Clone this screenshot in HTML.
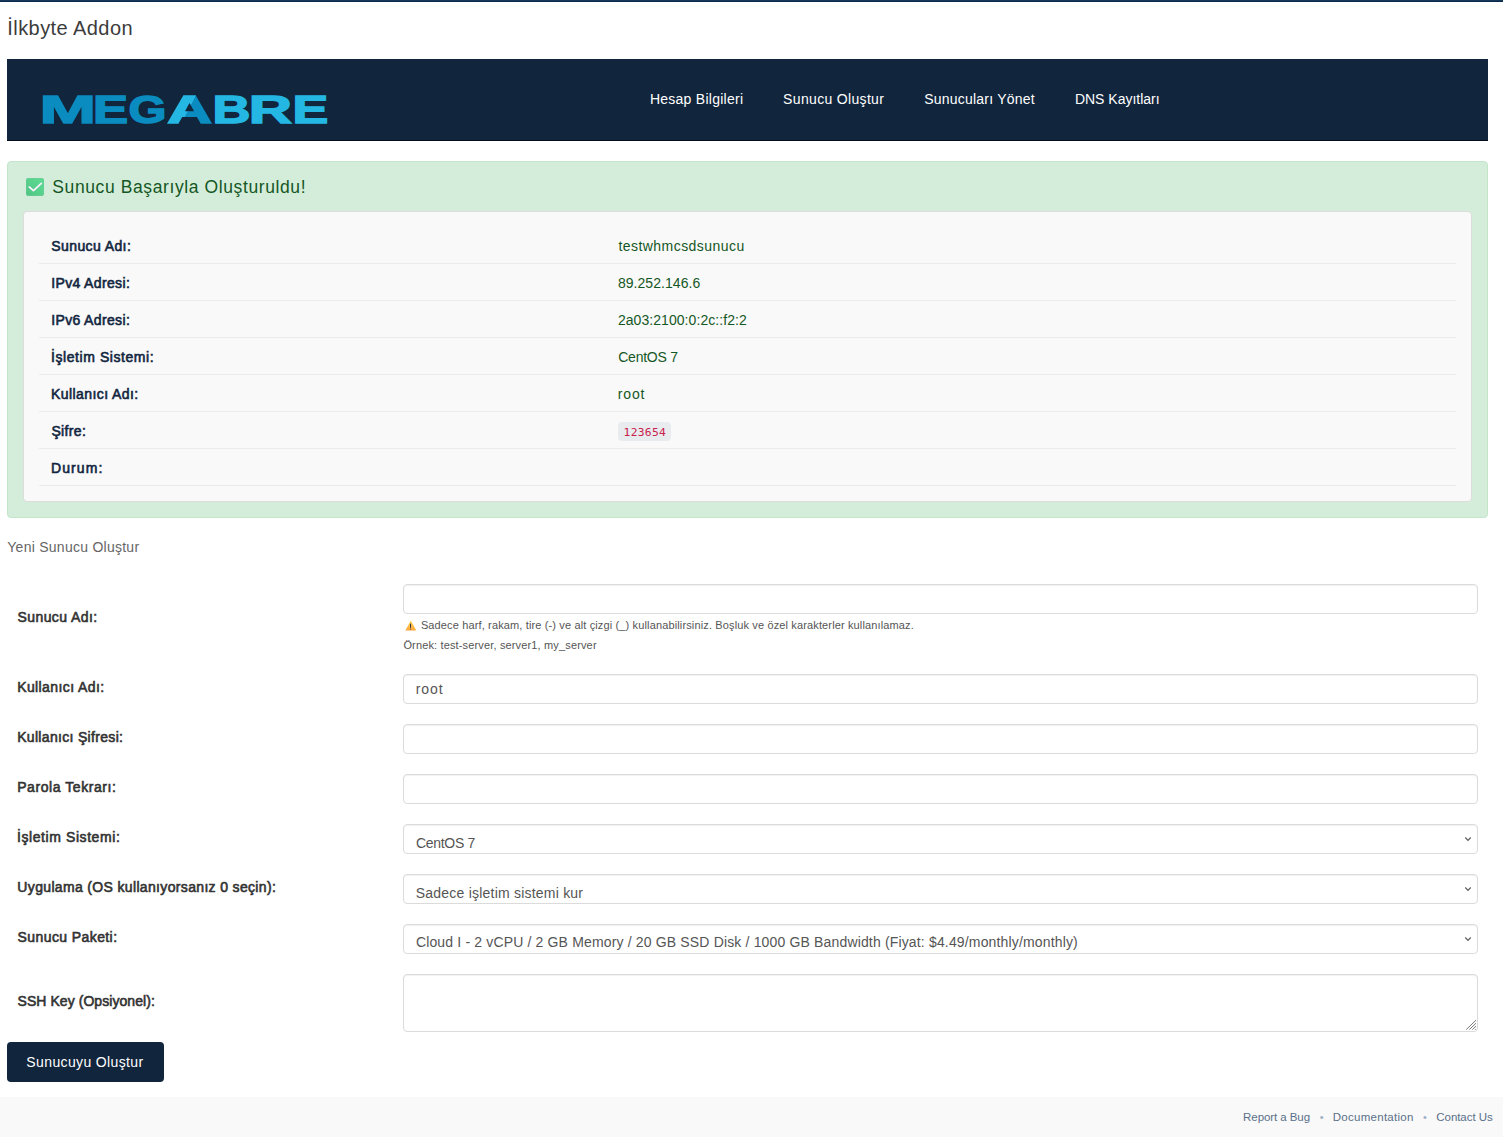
<!DOCTYPE html>
<html lang="tr">
<head>
<meta charset="utf-8">
<title>İlkbyte Addon</title>
<style>
*{box-sizing:border-box}
html,body,h1,h4,h5{margin:0;padding:0}
body{width:1503px;height:1137px;overflow:hidden;background:#fff;font-family:"Liberation Sans",sans-serif;font-size:14px;color:#333;position:relative}
.t{position:absolute;line-height:20px;white-space:nowrap;font-weight:400;text-decoration:none}
.topbar{position:absolute;left:0;top:0;width:1503px;height:2px;background:linear-gradient(#18385a 0,#18385a 50%,#082a4c 50%,#082a4c 100%)}
.nav{position:absolute;left:7px;top:59px;width:1481px;height:82px;background:#11253c;border-bottom:1px solid #050d1a}
.alert{position:absolute;left:7px;top:161px;width:1481px;height:357px;background:#d4edda;border:1px solid #c3e6cb;border-radius:4px}
.chk{position:absolute;left:26.1px;top:177.5px;width:18px;height:18px}
.panel{position:absolute;left:23px;top:211px;width:1449px;height:291px;background:#f9f9f9;border-radius:4px;border:1px solid #dcdcdc}
.hl{position:absolute;left:39px;width:1417px;height:1px;background:#ececec}
code.t{font-family:"DejaVu Sans Mono","Liberation Mono",monospace;font-size:11.3px;letter-spacing:0.3px;padding-left:1.2px;color:#c9204c;background:#e9ecef;border-radius:4px;left:618px;top:422px;width:52.5px;height:19px;line-height:22.6px;overflow:hidden;text-align:center}
.inp{position:absolute;left:403px;width:1075px;height:30px;border:1px solid #dbdbdb;border-radius:4px;background:#fff;box-shadow:inset 0 1px 1px rgba(0,0,0,.06)}
.chev{position:absolute;left:1464px;width:8px;height:6px}
.warn{position:absolute;left:404px;top:620px;width:13px;height:12px}
.btn{position:absolute;left:7px;top:1042px;width:157px;height:40px;background:#11253c;border-radius:4px}
.footer{position:absolute;left:0;top:1097px;width:1503px;height:40px;background:#f9f9f9}
.dot{font-size:11px;color:#9fafc4;top:1107.1px}
.grip{position:absolute;left:1465px;top:1019px;width:12px;height:12px}
</style>
</head>
<body>
<div class="topbar"></div>
<h1 class="t" id="t_h1" style="left:7.31px;top:17.82px;font-size:20px;color:#3c3c3c;letter-spacing:0.435px;">İlkbyte Addon</h1>
<div class="nav"></div>
<svg class="logo" style="position:absolute;left:30px;top:85px" width="320" height="50" viewBox="0 0 320 50">
<defs><linearGradient id="ag" gradientUnits="userSpaceOnUse" x1="151.55" y1="37.50" x2="151.903" y2="37.684"><stop offset="0" stop-color="#24b7e3"/><stop offset="1" stop-color="#0b8cc0"/></linearGradient></defs>
<text y="37.50" font-family="Liberation Sans, sans-serif" font-weight="700" font-size="38.08" stroke-width="1.4" stroke-linejoin="miter">
<tspan x="9.54" textLength="56.43" lengthAdjust="spacingAndGlyphs" fill="#0b8cc0" stroke="#0b8cc0">M</tspan><tspan x="63.14" textLength="35.11" lengthAdjust="spacingAndGlyphs" fill="#0b8cc0" stroke="#0b8cc0">E</tspan><tspan x="98.45" textLength="37.98" lengthAdjust="spacingAndGlyphs" fill="#0b8cc0" stroke="#0b8cc0">G</tspan><tspan x="136.95" textLength="45.13" lengthAdjust="spacingAndGlyphs" fill="url(#ag)" stroke="url(#ag)">A</tspan><tspan x="182.55" textLength="37.96" lengthAdjust="spacingAndGlyphs" fill="#24b7e3" stroke="#24b7e3">B</tspan><tspan x="218.71" textLength="43.21" lengthAdjust="spacingAndGlyphs" fill="#24b7e3" stroke="#24b7e3">R</tspan><tspan x="262.48" textLength="35.81" lengthAdjust="spacingAndGlyphs" fill="#24b7e3" stroke="#24b7e3">E</tspan></text>
</svg>
<a class="t" id="n1" style="left:649.89px;top:89.15px;font-size:14px;color:#fff;letter-spacing:0.261px;">Hesap Bilgileri</a><a class="t" id="n2" style="left:783.12px;top:89.15px;font-size:14px;color:#fff;letter-spacing:0.330px;">Sunucu Oluştur</a><a class="t" id="n3" style="left:924.16px;top:89.15px;font-size:14px;color:#fff;letter-spacing:0.228px;">Sunucuları Yönet</a><a class="t" id="n4" style="left:1074.89px;top:89.15px;font-size:14px;color:#fff;letter-spacing:-0.000px;">DNS Kayıtları</a>
<div class="alert"></div>
<svg class="chk" viewBox="0 0 18 18"><defs><linearGradient id="cg" x1="0" y1="1" x2="1" y2="0"><stop offset="0" stop-color="#4fc684"/><stop offset="1" stop-color="#5edc93"/></linearGradient></defs><rect x="0.2" y="0.2" width="17.6" height="17.6" rx="2.2" fill="url(#cg)"/><rect x="0.2" y="0.2" width="17.6" height="17.6" rx="2.2" fill="none" stroke="#3fae72" stroke-opacity=".45" stroke-width=".8"/><path d="M3.3 9 L7.5 12.6 L15.3 5.3" fill="none" stroke="#fdf0ff" stroke-width="1.7" stroke-linecap="round" stroke-linejoin="round"/></svg>
<h4 class="t" id="t_h4" style="left:52.34px;top:177.14px;font-size:17.5px;color:#155724;letter-spacing:0.600px;">Sunucu Başarıyla Oluşturuldu!</h4>
<div class="panel"></div>
<div class="hl" style="top:263px"></div><div class="hl" style="top:300px"></div><div class="hl" style="top:337px"></div><div class="hl" style="top:374px"></div><div class="hl" style="top:411px"></div><div class="hl" style="top:448px"></div><div class="hl" style="top:485px"></div>
<b class="t" id="l1" style="left:51.35px;top:235.95px;font-size:14px;color:#12263f;-webkit-text-stroke:0.6px #12263f;letter-spacing:0.393px;">Sunucu Adı:</b><span class="t" id="v1" style="left:618.38px;top:235.95px;font-size:14px;color:#155724;letter-spacing:0.454px;">testwhmcsdsunucu</span>
<b class="t" id="l2" style="left:51.23px;top:272.95px;font-size:14px;color:#12263f;-webkit-text-stroke:0.6px #12263f;letter-spacing:0.355px;">IPv4 Adresi:</b><span class="t" id="v2" style="left:617.91px;top:272.95px;font-size:14px;color:#155724;letter-spacing:0.054px;">89.252.146.6</span>
<b class="t" id="l3" style="left:51.23px;top:309.95px;font-size:14px;color:#12263f;-webkit-text-stroke:0.6px #12263f;letter-spacing:0.355px;">IPv6 Adresi:</b><span class="t" id="v3" style="left:617.88px;top:309.95px;font-size:14px;color:#155724;letter-spacing:0.063px;">2a03:2100:0:2c::f2:2</span>
<b class="t" id="l4" style="left:51.06px;top:346.95px;font-size:14px;color:#12263f;-webkit-text-stroke:0.6px #12263f;letter-spacing:0.563px;">İşletim Sistemi:</b><span class="t" id="v4" style="left:618.28px;top:346.95px;font-size:14px;color:#155724;letter-spacing:-0.255px;">CentOS 7</span>
<b class="t" id="l5" style="left:51.02px;top:383.95px;font-size:14px;color:#12263f;-webkit-text-stroke:0.6px #12263f;letter-spacing:0.415px;">Kullanıcı Adı:</b><span class="t" id="v5" style="left:617.87px;top:383.95px;font-size:14px;color:#155724;letter-spacing:0.833px;">root</span>
<b class="t" id="l6" style="left:51.40px;top:420.95px;font-size:14px;color:#12263f;-webkit-text-stroke:0.6px #12263f;letter-spacing:0.340px;">Şifre:</b><code class="t" id="v6">123654</code>
<b class="t" id="l7" style="left:51.02px;top:457.95px;font-size:14px;color:#12263f;-webkit-text-stroke:0.6px #12263f;letter-spacing:1.077px;">Durum:</b>
<h5 class="t" id="t_sub" style="left:7.31px;top:537.15px;font-size:14px;color:#666;letter-spacing:0.258px;">Yeni Sunucu Oluştur</h5>
<div class="inp" style="top:584px"></div>
<svg class="warn" viewBox="0 0 13 12"><defs><linearGradient id="wg" x1="0" y1="0" x2="0" y2="1"><stop offset="0" stop-color="#ffd84f"/><stop offset="1" stop-color="#ffa63a"/></linearGradient></defs><path d="M6.8 0.5 L12.1 10.3 Q12.2 10.6 11.9 10.6 L1.7 10.6 Q1.4 10.6 1.5 10.3 Z" fill="url(#wg)"/><rect x="6" y="3.4" width="1" height="4.6" rx=".4" fill="#3b3650"/><rect x="6" y="8.6" width="1" height="1.1" rx=".4" fill="#3b3650"/></svg>
<small class="t" id="h1" style="left:420.89px;top:615.19px;font-size:11px;color:#555;letter-spacing:0.137px;">Sadece harf, rakam, tire (-) ve alt çizgi (_) kullanabilirsiniz. Boşluk ve özel karakterler kullanılamaz.</small>
<small class="t" id="h2" style="left:403.39px;top:635.09px;font-size:11px;color:#555;letter-spacing:0.149px;">Örnek: test-server, server1, my_server</small>
<label class="t" id="f1" style="left:17.59px;top:606.95px;font-size:14px;color:#333;-webkit-text-stroke:0.6px #333;letter-spacing:0.400px;">Sunucu Adı:</label>
<div class="inp" style="top:674px"></div><span class="t" id="i2" style="left:415.74px;top:678.95px;font-size:14px;color:#555;letter-spacing:0.963px;">root</span><label class="t" id="f2" style="left:17.17px;top:676.85px;font-size:14px;color:#333;-webkit-text-stroke:0.6px #333;letter-spacing:0.400px;">Kullanıcı Adı:</label>
<div class="inp" style="top:724px"></div><label class="t" id="f3" style="left:17.17px;top:726.75px;font-size:14px;color:#333;-webkit-text-stroke:0.6px #333;letter-spacing:0.321px;">Kullanıcı Şifresi:</label>
<div class="inp" style="top:774px"></div><label class="t" id="f4" style="left:17.17px;top:776.65px;font-size:14px;color:#333;-webkit-text-stroke:0.6px #333;letter-spacing:0.573px;">Parola Tekrarı:</label>
<div class="inp" style="top:824px"></div><span class="t" id="i5" style="left:415.88px;top:832.65px;font-size:14px;color:#555;letter-spacing:-0.279px;">CentOS 7</span><label class="t" id="f5" style="left:17.02px;top:826.55px;font-size:14px;color:#333;-webkit-text-stroke:0.6px #333;letter-spacing:0.576px;">İşletim Sistemi:</label><svg class="chev" style="top:836.3px" viewBox="0 0 8 6"><path d="M1.3 1.5 L4 4.3 L6.7 1.5" fill="none" stroke="#5a5a5a" stroke-width="1.15"/></svg>
<div class="inp" style="top:874px"></div><span class="t" id="i6" style="left:415.75px;top:882.55px;font-size:14px;color:#555;letter-spacing:0.218px;">Sadece işletim sistemi kur</span><label class="t" id="f6" style="left:17.36px;top:876.85px;font-size:14px;color:#333;-webkit-text-stroke:0.6px #333;letter-spacing:0.340px;">Uygulama (OS kullanıyorsanız 0 seçin):</label><svg class="chev" style="top:886.3px" viewBox="0 0 8 6"><path d="M1.3 1.5 L4 4.3 L6.7 1.5" fill="none" stroke="#5a5a5a" stroke-width="1.15"/></svg>
<div class="inp" style="top:924px"></div><span class="t" id="i7" style="left:415.88px;top:932.45px;font-size:14px;color:#555;letter-spacing:0.158px;">Cloud I - 2 vCPU / 2 GB Memory / 20 GB SSD Disk / 1000 GB Bandwidth (Fiyat: $4.49/monthly/monthly)</span><label class="t" id="f7" style="left:17.59px;top:927.05px;font-size:14px;color:#333;-webkit-text-stroke:0.6px #333;letter-spacing:0.406px;">Sunucu Paketi:</label><svg class="chev" style="top:936.3px" viewBox="0 0 8 6"><path d="M1.3 1.5 L4 4.3 L6.7 1.5" fill="none" stroke="#5a5a5a" stroke-width="1.15"/></svg>
<div class="inp" style="top:974px;height:58px"></div><label class="t" id="f8" style="left:17.59px;top:990.95px;font-size:14px;color:#333;-webkit-text-stroke:0.6px #333;letter-spacing:0.055px;">SSH Key (Opsiyonel):</label>
<svg class="grip" viewBox="0 0 12 12"><path d="M11 1.2 L1.2 10.6 M11 4.2 L4.3 10.6 M11 7.2 L7.4 10.6 M11 10 L10.4 10.6" stroke="#6b6b6b" stroke-width="0.9" fill="none"/></svg>
<div class="btn"></div><span class="t" id="t_btn" style="left:26.37px;top:1052.45px;font-size:14px;color:#fff;letter-spacing:0.369px;">Sunucuyu Oluştur</span>
<div class="footer"></div>
<a class="t" id="ft1" style="left:1243.09px;top:1106.82px;font-size:11.5px;color:#5a7089;letter-spacing:-0.068px;">Report a Bug</a><span class="t dot" style="left:1319.7px">•</span><a class="t" id="ft2" style="left:1332.77px;top:1106.82px;font-size:11.5px;color:#5a7089;letter-spacing:0.274px;">Documentation</a><span class="t dot" style="left:1423.1px">•</span><a class="t" id="ft3" style="left:1436.34px;top:1106.82px;font-size:11.5px;color:#5a7089;letter-spacing:-0.064px;">Contact Us</a>
</body>
</html>
